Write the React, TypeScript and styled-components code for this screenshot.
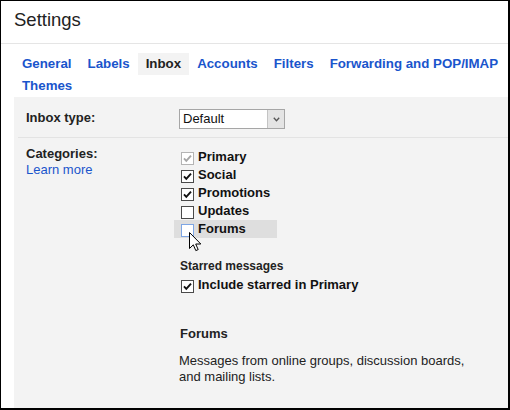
import React from 'react';
import styled, { createGlobalStyle } from 'styled-components';

const Global = createGlobalStyle`
  html, body { margin: 0; padding: 0; background: #fff; }
  body { font-family: "Liberation Sans", Arial, sans-serif; color: #222; }
  * { box-sizing: border-box; }
`;

const Frame = styled.div`
  width: 510px;
  height: 410px;
  border-style: solid;
  border-color: #000;
  border-width: 1px 2px 2px 1px;
  display: flex;
  flex-direction: column;
  overflow: hidden;
  background: #fff;
`;

const Header = styled.header`
  flex: none;
  height: 43px;
  padding: 9px 0 0 13px;
  border-bottom: 1px solid #e5e5e5;
  font-size: 18.5px;
  line-height: 20px;
  color: #222;
`;

const Tabs = styled.nav`
  flex: none;
  display: flex;
  flex-wrap: wrap;
  padding: 9px 0 0 13px;
`;

const Tab = styled.a<{ $active?: boolean }>`
  height: 22px;
  line-height: 22px;
  padding: 0 8px;
  font-size: 13.3px;
  font-weight: bold;
  white-space: nowrap;
  text-decoration: none;
  color: ${(p) => (p.$active ? '#222' : '#1a55cc')};
  background: ${(p) => (p.$active ? '#f3f3f3' : 'transparent')};
`;

const Panel = styled.section`
  flex: 1;
  margin-left: 13px;
  padding-left: 4px;
  background: #f3f3f3;
`;

const Row = styled.div<{ $divider?: boolean; $pt: number; $pb: number }>`
  display: flex;
  align-items: flex-start;
  padding: ${(p) => `${p.$pt}px 0 ${p.$pb}px 8px`};
  border-bottom: ${(p) => (p.$divider ? '1px solid #e3e3e3' : 'none')};
`;

const LabelCol = styled.div<{ $pt: number }>`
  flex: none;
  width: 153px;
  padding-top: ${(p) => p.$pt}px;
  font-size: 13px;
  line-height: 16px;
`;

const LabelText = styled.div`
  font-weight: bold;
  color: #222;
`;

const LearnMore = styled.a`
  display: block;
  color: #1a55cc;
  text-decoration: none;
`;

const ValueCol = styled.div<{ $pt: number }>`
  flex: 1;
  padding-top: ${(p) => p.$pt}px;
  display: flex;
  flex-direction: column;
  align-items: flex-start;
`;

const Select = styled.div`
  width: 106px;
  height: 20px;
  border: 1px solid #a6a6a6;
  background: #fff;
  display: flex;
  align-items: center;
  font-size: 13px;
  color: #111;
`;

const SelectText = styled.span`
  flex: 1;
  padding-left: 3px;
  line-height: 18px;
`;

const SelectButton = styled.span`
  width: 17px;
  height: 18px;
  background: #e4e4e4;
  border-left: 1px solid #c4c4c4;
  display: flex;
  align-items: center;
  justify-content: center;
`;

const CheckRow = styled.div<{ $hover?: boolean; $fixed?: boolean }>`
  position: relative;
  display: flex;
  align-items: flex-start;
  gap: 4px;
  height: 18px;
  width: ${(p) => (p.$fixed ? '103px' : 'auto')};
  margin-left: -5px;
  padding-left: 7px;
  background: ${(p) => (p.$hover ? '#dedede' : 'transparent')};
  font-size: 13px;
  font-weight: bold;
  line-height: 18px;
  white-space: nowrap;
  color: #111;
`;

const Box = styled.span<{ $state: 'on' | 'off' | 'disabled' | 'hover' }>`
  flex: none;
  width: 13px;
  height: 13px;
  margin-top: 4px;
  background: #fff;
  border: 1px solid
    ${(p) =>
      p.$state === 'disabled' ? '#b4b4b4' : p.$state === 'hover' ? '#7ea6e4' : '#4a4a4a'};
  display: flex;
  align-items: center;
  justify-content: center;
`;

const SubHeading = styled.div<{ $mt: number; $size: number }>`
  margin-top: ${(p) => p.$mt}px;
  padding-left: 1px;
  font-size: ${(p) => p.$size}px;
  font-weight: bold;
  line-height: 16px;
  color: #222;
`;

const IncludeRow = styled.div`
  margin-top: 2px;
`;

const Description = styled.p`
  margin: 11px 0 0 0;
  max-width: 300px;
  font-size: 13px;
  line-height: 16px;
  color: #222;
`;

const Cursor = styled.svg`
  position: absolute;
  left: 15px;
  top: 12px;
  width: 13px;
  height: 20px;
  overflow: visible;
`;

type BoxState = 'on' | 'off' | 'disabled' | 'hover';

const Check: React.FC<{ state: BoxState; checked: boolean }> = ({ state, checked }) => (
  <Box $state={state}>
    {checked && (
      <svg width="11" height="11" viewBox="0 0 11 11">
        <polyline
          points="2,5.3 4.3,7.8 9,2.6"
          fill="none"
          stroke={state === 'disabled' ? '#a6a6a6' : '#111'}
          strokeWidth="1.9"
        />
      </svg>
    )}
  </Box>
);

const categories: { label: string; state: BoxState; checked: boolean }[] = [
  { label: 'Primary', state: 'disabled', checked: true },
  { label: 'Social', state: 'on', checked: true },
  { label: 'Promotions', state: 'on', checked: true },
  { label: 'Updates', state: 'off', checked: false },
  { label: 'Forums', state: 'hover', checked: false },
];

const tabs = ['General', 'Labels', 'Inbox', 'Accounts', 'Filters', 'Forwarding and POP/IMAP', 'Themes'];

export default function App() {
  return (
    <>
      <Global />
      <Frame>
        <Header>Settings</Header>
        <Tabs>
          {tabs.map((t) => (
            <Tab key={t} $active={t === 'Inbox'}>
              {t}
            </Tab>
          ))}
        </Tabs>
        <Panel>
          <Row $divider $pt={12} $pb={8}>
            <LabelCol $pt={1}>
              <LabelText>Inbox type:</LabelText>
            </LabelCol>
            <ValueCol $pt={0}>
              <Select>
                <SelectText>Default</SelectText>
                <SelectButton>
                  <svg width="7" height="5" viewBox="0 0 7 5">
                    <polyline points="0.8,0.8 3.5,3.8 6.2,0.8" fill="none" stroke="#555" strokeWidth="1.3" />
                  </svg>
                </SelectButton>
              </Select>
            </ValueCol>
          </Row>
          <Row $pt={0} $pb={0}>
            <LabelCol $pt={8}>
              <LabelText>Categories:</LabelText>
              <LearnMore>Learn more</LearnMore>
            </LabelCol>
            <ValueCol $pt={10}>
              {categories.map((c) => (
                <CheckRow key={c.label} $fixed $hover={c.state === 'hover'}>
                  <Check state={c.state} checked={c.checked} />
                  {c.label}
                  {c.state === 'hover' && (
                    <Cursor viewBox="0 0 13 20">
                      <path
                        d="M0.5 0.5 L0.5 16.5 L4.3 12.8 L6.8 18.6 L9.2 17.6 L6.7 12 L11.8 12 Z"
                        fill="#fff"
                        stroke="#000"
                        strokeWidth="1"
                        strokeLinejoin="miter"
                      />
                    </Cursor>
                  )}
                </CheckRow>
              ))}
              <SubHeading $mt={20} $size={12}>
                Starred messages
              </SubHeading>
              <IncludeRow>
                <CheckRow>
                  <Check state="on" checked />
                  Include starred in Primary
                </CheckRow>
              </IncludeRow>
              <SubHeading $mt={32} $size={13}>
                Forums
              </SubHeading>
              <Description>
                Messages from online groups, discussion boards, and mailing lists.
              </Description>
            </ValueCol>
          </Row>
        </Panel>
      </Frame>
    </>
  );
}
